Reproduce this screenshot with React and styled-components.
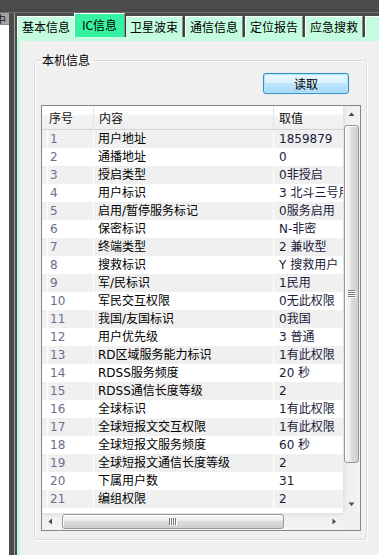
import React from "react";
import styled, { createGlobalStyle } from "styled-components";

const FONT = `"DejaVu Sans", "Noto Sans CJK SC", sans-serif`;
const CJK = `"Noto Sans CJK SC", "DejaVu Sans", sans-serif`;

const Global = createGlobalStyle`
  *, *::before, *::after { box-sizing: border-box; }
  html, body { margin: 0; padding: 0; background: #4b4b4b; }
  body { font-family: ${FONT}; font-size: 12px; color: #000; }
`;

const Screen = styled.div`
  width: 379px;
  height: 555px;
  overflow: hidden;
  display: flex;
  flex-direction: column;
  background: #4b4b4b;
`;
const TopBar = styled.div`
  height: 13px;
  flex: none;
  background: #4b4b4b;
  border-bottom: 1px solid #6e6e6e;
`;
const Body = styled.div`
  flex: 1;
  display: flex;
  min-height: 0;
`;
const SidePane = styled.div`
  width: 9px;
  flex: none;
  background: #fff;
  overflow: hidden;
`;
const SideTab = styled.div`
  height: 12px;
  background: #a4a4a4;
  border-bottom: 1px solid #8a8a8a;
  font: 11px/12px ${CJK};
  color: #222;
  white-space: nowrap;
  text-indent: -5px;
  overflow: hidden;
`;
const Gutter = styled.div`
  width: 6px;
  flex: none;
  background: #4b4b4b;
  border-right: 1px solid #a2a2a2;
`;
const TabControl = styled.div`
  flex: 1;
  min-width: 0;
  display: flex;
  flex-direction: column;
  padding-left: 2px;
`;
const TabStrip = styled.div`
  height: 24px;
  flex: none;
  display: flex;
  align-items: flex-end;
  white-space: nowrap;
`;
const Tab = styled.div`
  flex: none;
  width: ${(p) => (p.$active ? 51 : 58)}px;
  height: ${(p) => (p.$active ? 24 : 21)}px;
  margin-left: ${(p) => (p.$active ? -1 : 0)}px;
  margin-right: ${(p) => (p.$gap ? 2 : 0)}px;
  background: ${(p) => (p.$active ? "#35f2a0" : "#c3fcdf")};
  border-top: 1px solid #fff;
  border-left: 1px solid #fff;
  border-right: 1px solid #8c8c8c;
  box-shadow: 1px 0 0 #3c3c3c;
  font: 12px/${(p) => (p.$active ? 22 : 19)}px ${CJK};
  text-align: center;
  overflow: hidden;
  position: relative;
  z-index: ${(p) => (p.$active ? 1 : 0)};
`;
const Page = styled.div`
  flex: 1;
  min-height: 0;
  display: flex;
  background: #c3fcdf;
  padding: 4px 0 0 3px;
`;
const Panel = styled.div`
  flex: 1;
  background: #f0f0f0;
  padding: 13px 0 0 14px;
`;
const Group = styled.fieldset`
  margin: 0;
  width: 333px;
  height: 486px;
  padding: 0 6px 0 6px;
  border: 1px solid #d5dfe5;
  border-radius: 3px;
  box-shadow: inset 1px 1px 0 #fff, 1px 1px 0 #fff;
  min-inline-size: 0;
`;
const Legend = styled.legend`
  padding: 0 1px;
  margin-left: 0;
  font: 12px/12px ${CJK};
  color: #000;
`;
const ButtonRow = styled.div`
  display: flex;
  justify-content: flex-end;
  padding: 7px 11px 0 0;
`;
const Button = styled.button`
  width: 86px;
  height: 21px;
  padding: 0;
  border: 1px solid #3c8ec4;
  border-radius: 3px;
  background: linear-gradient(#eaf6fd 0%, #d9f0fc 50%, #bee6fd 50%, #a7d9f5 100%);
  box-shadow: inset 0 0 0 1px #aee6fb, 0 0 1px #7fd0f5;
  font: 12px/19px ${CJK};
  color: #000;
`;
const ListBox = styled.div`
  margin-top: 11px;
  width: 320px;
  height: 426px;
  border: 1px solid #828790;
  background: #fff;
  display: grid;
  grid-template-columns: 301px 17px;
  grid-template-rows: 407px 17px;
`;
const Viewport = styled.div`
  overflow: hidden;
  min-width: 0;
`;
const HeaderRow = styled.div`
  display: flex;
  height: 24px;
  border-bottom: 1px solid #d5d5d5;
  background: linear-gradient(#ffffff 0%, #ffffff 40%, #f4f4f5 41%, #efeff1 100%);
`;
const HeaderCell = styled.div`
  flex: none;
  width: ${(p) => p.$w}px;
  padding-left: ${(p) => p.$pad}px;
  border-right: ${(p) => (p.$last ? "none" : "1px solid #e3e5e8")};
  font: 12px/23px ${CJK};
  color: #111;
  white-space: nowrap;
  overflow: hidden;
`;
const Row = styled.div`
  display: flex;
  height: 18px;
  background: ${(p) => (p.$shade ? "#f0f0f0" : "#ffffff")};
`;
const Cell = styled.div`
  flex: none;
  width: ${(p) => p.$w}px;
  padding-left: ${(p) => p.$pad}px;
  border-right: 1px solid #fff;
  line-height: 18px;
  white-space: nowrap;
  overflow: hidden;
  color: ${(p) => p.$color || "#000"};
`;
const VScroll = styled.div`
  display: flex;
  flex-direction: column;
  background: linear-gradient(90deg, #e2e2e2 0%, #efefef 25%, #f4f4f4 100%);
`;
const HScroll = styled.div`
  display: flex;
  background: linear-gradient(180deg, #e2e2e2 0%, #efefef 25%, #f4f4f4 100%);
`;
const Corner = styled.div`
  background: #f0f0f0;
`;
const Arrow = styled.div`
  flex: none;
  width: 17px;
  height: 17px;
  display: flex;
  align-items: center;
  justify-content: center;
`;
const VThumb = styled.div`
  flex: none;
  margin: 2px 1px 0 1px;
  height: 338px;
  border: 1px solid #979797;
  border-radius: 3px;
  background: linear-gradient(90deg, #f6f6f6 0%, #ececec 45%, #dcdcdc 50%, #cfcfcf 100%);
  box-shadow: inset 1px 1px 0 #fff;
  display: flex;
  align-items: center;
  justify-content: center;
`;
const HThumb = styled.div`
  flex: none;
  margin: 1px 0 1px 3px;
  width: 222px;
  border: 1px solid #979797;
  border-radius: 3px;
  background: linear-gradient(180deg, #f6f6f6 0%, #ececec 45%, #dcdcdc 50%, #cfcfcf 100%);
  box-shadow: inset 1px 1px 0 #fff;
  display: flex;
  align-items: center;
  justify-content: center;
`;
const Spacer = styled.div`
  flex: 1;
`;

const Tri = ({ dir }) => {
  const paths = {
    up: "M0.5 4 L3.5 0.5 L6.5 4 Z",
    down: "M0.5 0.5 L3.5 4 L6.5 0.5 Z",
  };
  if (dir === "left" || dir === "right") {
    const d = dir === "left" ? "M4 0.5 L0.5 3.5 L4 6.5 Z" : "M0.5 0.5 L4 3.5 L0.5 6.5 Z";
    return (
      <svg width="5" height="7" viewBox="0 0 5 7">
        <path d={d} fill="#4a4a4a" />
      </svg>
    );
  }
  return (
    <svg width="7" height="5" viewBox="0 0 7 5">
      <path d={paths[dir]} fill="#4a4a4a" />
    </svg>
  );
};

const GripV = () => (
  <svg width="8" height="8" viewBox="0 0 8 8">
    {[0, 2, 4, 6].map((y) => (
      <g key={y}>
        <rect x="0" y={y} width="7" height="1" fill="#7a7a7a" />
        <rect x="1" y={y + 1} width="7" height="1" fill="#fdfdfd" />
      </g>
    ))}
  </svg>
);
const GripH = () => (
  <svg width="8" height="8" viewBox="0 0 8 8">
    {[0, 2, 4, 6].map((x) => (
      <g key={x}>
        <rect x={x} y="0" width="1" height="7" fill="#7a7a7a" />
        <rect x={x + 1} y="1" width="1" height="7" fill="#fdfdfd" />
      </g>
    ))}
  </svg>
);

const tabs = ["基本信息", "IC信息", "卫星波束", "通信信息", "定位报告", "应急搜救", "查询"];

const rows = [
  ["用户地址", "1859879"],
  ["通播地址", "0"],
  ["授启类型", "0非授启"],
  ["用户标识", "3 北斗三号用户"],
  ["启用/暂停服务标记", "0服务启用"],
  ["保密标识", "N-非密"],
  ["终端类型", "2 兼收型"],
  ["搜救标识", "Y 搜救用户"],
  ["军/民标识", "1民用"],
  ["军民交互权限", "0无此权限"],
  ["我国/友国标识", "0我国"],
  ["用户优先级", "3 普通"],
  ["RD区域服务能力标识", "1有此权限"],
  ["RDSS服务频度", "20 秒"],
  ["RDSS通信长度等级", "2"],
  ["全球标识", "1有此权限"],
  ["全球短报文交互权限", "1有此权限"],
  ["全球短报文服务频度", "60 秒"],
  ["全球短报文通信长度等级", "2"],
  ["下属用户数", "31"],
  ["编组权限", "2"],
  ["", ""],
];

export default function App() {
  return (
    <>
      <Global />
      <Screen>
        <TopBar />
        <Body>
          <SidePane>
            <SideTab>中</SideTab>
          </SidePane>
          <Gutter />
          <TabControl>
            <TabStrip>
              {tabs.map((t, i) => (
                <Tab key={t} $active={i === 1} $gap={i >= 2}>
                  {t}
                </Tab>
              ))}
            </TabStrip>
            <Page>
              <Panel>
                <Group>
                  <Legend>本机信息</Legend>
                  <ButtonRow>
                    <Button>读取</Button>
                  </ButtonRow>
                  <ListBox>
                    <Viewport>
                      <HeaderRow>
                        <HeaderCell $w={52} $pad={7}>序号</HeaderCell>
                        <HeaderCell $w={180} $pad={5}>内容</HeaderCell>
                        <HeaderCell $w={120} $pad={5} $last>取值</HeaderCell>
                      </HeaderRow>
                      {rows.map(([c, v], i) => (
                        <Row key={i} $shade={i % 2 === 0}>
                          <Cell $w={6} $pad={0} />
                          <Cell $w={46} $pad={2} $color="#6e6e8c">
                            {c ? i + 1 : ""}
                          </Cell>
                          <Cell $w={180} $pad={4}>{c}</Cell>
                          <Cell $w={120} $pad={5} $color="#1a1a38">{v}</Cell>
                        </Row>
                      ))}
                    </Viewport>
                    <VScroll>
                      <Arrow><Tri dir="up" /></Arrow>
                      <VThumb><GripV /></VThumb>
                      <Spacer />
                      <Arrow><Tri dir="down" /></Arrow>
                    </VScroll>
                    <HScroll>
                      <Arrow><Tri dir="left" /></Arrow>
                      <HThumb><GripH /></HThumb>
                      <Spacer />
                      <Arrow><Tri dir="right" /></Arrow>
                    </HScroll>
                    <Corner />
                  </ListBox>
                </Group>
              </Panel>
            </Page>
          </TabControl>
        </Body>
      </Screen>
    </>
  );
}
